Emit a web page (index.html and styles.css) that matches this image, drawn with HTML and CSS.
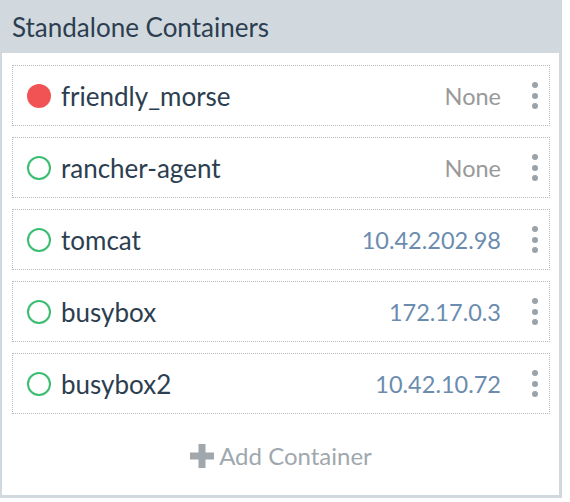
FILE: index.html
```html
<!DOCTYPE html>
<html>
<head>
<meta charset="utf-8">
<link rel="stylesheet" href="styles.css">
</head>
<body>
<section class="panel">
  <header class="panel-head">Standalone Containers</header>
  <div class="panel-body">
    <div class="row">
      <span class="status status-error"></span>
      <span class="name">friendly_morse</span>
      <span class="ip ip-none">None</span>
      <span class="more"><i></i><i></i><i></i></span>
    </div>
    <div class="row">
      <span class="status status-ok"></span>
      <span class="name">rancher-agent</span>
      <span class="ip ip-none">None</span>
      <span class="more"><i></i><i></i><i></i></span>
    </div>
    <div class="row">
      <span class="status status-ok"></span>
      <span class="name">tomcat</span>
      <span class="ip">10.42.202.98</span>
      <span class="more"><i></i><i></i><i></i></span>
    </div>
    <div class="row">
      <span class="status status-ok"></span>
      <span class="name">busybox</span>
      <span class="ip">172.17.0.3</span>
      <span class="more"><i></i><i></i><i></i></span>
    </div>
    <div class="row">
      <span class="status status-ok"></span>
      <span class="name">busybox2</span>
      <span class="ip">10.42.10.72</span>
      <span class="more"><i></i><i></i><i></i></span>
    </div>
    <div class="add">
      <svg class="plus" width="24" height="24" viewBox="0 0 24 24"><rect x="0" y="8.5" width="24" height="7" fill="#a0a8ae"/><rect x="8.5" y="0" width="7" height="24" fill="#a0a8ae"/></svg>
      <span>Add Container</span>
    </div>
  </div>
</section>
</body>
</html>
```
FILE: styles.css
```css
html, body {
  margin: 0;
  padding: 0;
  background: #fff;
}
body {
  font-family: Lato, "Open Sans", sans-serif;
}
.panel {
  width: 557px;
  height: 495px;
  border: 3px solid #d1d9df;
  border-left-width: 2px;
  border-top: 0;
}
.panel-head {
  background: #d1d9df;
  height: 53px;
  box-sizing: border-box;
  padding: 12px 10px 0 10px;
  font-size: 26px;
  line-height: 30px;
  color: #2c3e50;
}
.panel-body {
  padding: 12px 9px 0 10px;
  display: flex;
  flex-direction: column;
  gap: 11px;
}
.row {
  height: 61px;
  box-sizing: border-box;
  border: 1px dotted #bcbcbc;
  display: flex;
  align-items: center;
  padding: 0 11px 0 14px;
}
.status {
  width: 24px;
  height: 24px;
  box-sizing: border-box;
  border-radius: 50%;
  flex: none;
  margin-right: 10px;
}
.status-error {
  background: #f15354;
}
.status-ok {
  border: 2px solid #3bbd6f;
}
.name {
  flex: 1;
  font-size: 26px;
  line-height: 30px;
  color: #2c3e50;
}
.ip {
  font-size: 23.5px;
  line-height: 28px;
  color: #6b8cae;
  margin-right: 31px;
}
.ip-none {
  color: #999;
}
.more {
  display: flex;
  flex-direction: column;
  gap: 4.5px;
  width: 6px;
}
.more i {
  display: block;
  width: 6px;
  height: 6px;
  border-radius: 50%;
  background: #9aa3aa;
}
.add {
  display: flex;
  align-items: center;
  justify-content: center;
  gap: 5px;
  height: 30px;
  margin-top: 16px;
  font-size: 24px;
  line-height: 30px;
  color: #a0a8ae;
}
.plus {
  flex: none;
}
```
